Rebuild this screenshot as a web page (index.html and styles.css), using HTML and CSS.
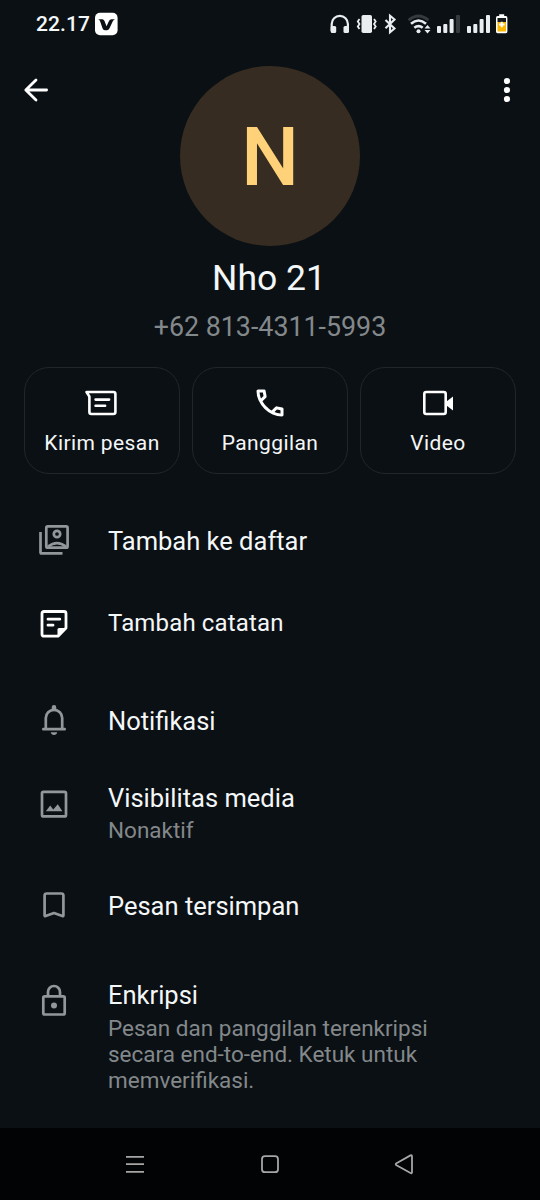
FILE: index.html
```html
<!DOCTYPE html>
<html lang="id">
<head>
<meta charset="utf-8">
<title>Info kontak</title>
<link rel="stylesheet" href="styles.css">
</head>
<body>
<div class="screen">
  <div class="status">
    <div class="status-left">
      <span class="clock">22.17</span>
      <svg width="24" height="24" viewBox="0 0 24 24"><rect x="0" y="0.700" width="22.600" height="22.600" rx="5" fill="#fff"/><path d="M3 7.200h4.200q1.600 0 2.200 1.500l2.100 5.600 2.600-5.600q.7-1.500 2.300-1.500h3.600q-1.400.4-2.200 2l-3.400 7.200q-.8 1.800-2.500 1.800H9.800q-1.500 0-2.200-1.700L5 9q-.6-1.500-2-1.800z" fill="#0b1014"/></svg>
    </div>
    <svg class="status-icons" width="180" height="24" viewBox="330 12 180 24" fill="#e9edef">
      <path d="M331.700 31v-7a8.100 8.100 0 0 1 16.200 0v7" fill="none" stroke="#e9edef" stroke-width="2.200"/>
      <rect x="330.700" y="26" width="5.500" height="7" rx="1.500"/><rect x="343.500" y="26" width="5.500" height="7" rx="1.500"/>
      <rect x="361.500" y="15" width="10.500" height="18" rx="1.800"/>
      <path d="M359.500 19l-1.700 2.500 1.700 2.500-1.700 2.500 1.700 2.500M374 19l1.700 2.500-1.700 2.500 1.700 2.500-1.700 2.500" fill="none" stroke="#e9edef" stroke-width="1.800"/>
      <path d="M385.500 20l9 8.500-4.500 3.800V15.800l4.500 3.700-9 8.700" fill="none" stroke="#e9edef" stroke-width="2.100"/>
      <g fill="none" stroke="#e9edef" stroke-width="2.600">
        <path d="M408.500 20.200q10-8.400 20 0" stroke="#343a3d" stroke-width="2.800"/>
        <path d="M411 23.800q7.500-6.600 15 0"/>
        <path d="M414.300 27.800q4.200-3.500 8.400 0"/>
      </g>
      <circle cx="418.500" cy="31.200" r="2"/><path d="M427.500 25l3 3.500h-6zM427.500 33.500l3-3.500h-6z"/>
      <rect x="437" y="26" width="4" height="7" rx="1"/><rect x="443.300" y="24" width="4" height="9" rx="1"/><rect x="449.600" y="19" width="4" height="14" rx="1"/><rect x="456" y="15" width="4" height="18" rx="1" fill="#343a3d"/>
      <rect x="467" y="26" width="4" height="7" rx="1"/><rect x="473.300" y="24" width="4" height="9" rx="1"/><rect x="479.600" y="19" width="4" height="14" rx="1"/><rect x="486" y="15" width="4" height="18" rx="1"/>
      <path d="M496 18q0-2 1.500-2h1.700v-1.700h5V16h1.700q1.500 0 1.500 2v13.500q0 1.700-1.500 1.700h-8.400q-1.500 0-1.500-1.700z" fill="#fff"/>
      <path d="M497.500 18h8.500v4h-8.500z" fill="#15191b"/><path d="M497.500 22h8.500v9.500h-8.500z" fill="#fbb604"/>
      <path d="M501.800 21.800v5.400M499 24.500h5.600" stroke="#fff" stroke-width="2"/>
    </svg>
  </div>

  <div class="header">
    <svg class="back" width="48" height="48" viewBox="0 0 48 48" fill="none" stroke="#fff" stroke-width="2.800"><path d="M24 14L13.800 24 24 34M14 24h20.600" stroke-linecap="round" stroke-linejoin="round"/></svg>
    <div class="avatar">N</div>
    <svg class="more" width="48" height="48" viewBox="0 0 48 48" fill="#fff"><circle cx="27" cy="15" r="3.100"/><circle cx="27" cy="24" r="3.100"/><circle cx="27" cy="33" r="3.100"/></svg>
  </div>
  <h1 class="name">Nho 21</h1>
  <div class="phone">+62 813-4311-5993</div>

  <div class="actions">
    <div class="action">
      <svg width="36" height="36" viewBox="0 0 36 36" fill="none" stroke="#fff" stroke-width="2.600"><path d="M2.500 7H29.400q2 0 2 2v18q0 2-2 2H7.400q-2 0-2-2V11.500z" stroke-linejoin="round"/><path d="M11.600 14.600h13.500M11.600 20.800h9.500" stroke-linecap="round"/></svg>
      <span>Kirim pesan</span>
    </div>
    <div class="action">
      <svg width="36" height="36" viewBox="0 0 24 24" fill="#fff"><path d="M19.950 21q-3.125 0-6.175-1.362t-5.550-3.863-3.862-5.550T3 4.050q0-.45.3-.75t.75-.3H8.100q.35 0 .625.238t.325.562l.65 3.500q.05.4-.025.675T9.400 8.450L6.975 10.900q.5.925 1.187 1.787t1.513 1.663q.775.775 1.625 1.438T13.100 17l2.350-2.350q.225-.225.588-.337t.712-.063l3.450.7q.35.100.575.363T21 15.900v4.050q0 .45-.3.750t-.75.300zM6.025 9l1.650-1.650L7.250 5H5.025q.125 1.025.350 2.025T6.025 9zm8.950 8.950q.975.425 1.988.675T19 18.950v-2.200l-2.350-.475z"/></svg>
      <span>Panggilan</span>
    </div>
    <div class="action">
      <svg width="36" height="36" viewBox="0 0 36 36"><rect x="4.300" y="7" width="21.400" height="22" rx="2" fill="none" stroke="#fff" stroke-width="2.600"/><path d="M26.500 16.500l6.500-5v14l-6.500-5z" fill="#fff"/></svg>
      <span>Video</span>
    </div>
  </div>

  <div class="group lists">
    <div class="row">
      <svg width="36" height="36" viewBox="0 0 36 36" fill="none" stroke="#92979a" stroke-width="2.700"><rect x="10.300" y="3.400" width="21.300" height="21.300" rx="1.500"/><path d="M4.500 9v20.200q0 1.200 1.200 1.200H26.500"/><circle cx="21" cy="11" r="3.200"/><path d="M12 23.600q9-7 18 0"/></svg>
      <span class="title">Tambah ke daftar</span>
    </div>
    <div class="row">
      <svg width="36" height="36" viewBox="0 0 36 36" fill="none" stroke="#fff" stroke-width="2.800"><path d="M22 31.200H8q-2 0-2-2V8.500q0-2 2-2h20q2 0 2 2V23z" stroke-linejoin="round"/><path d="M21.500 32V24.500q0-1.500 1.500-1.500h8z" fill="#fff" stroke="none"/><path d="M12 14.200h11.800M12 20.200H17" stroke-linecap="round"/></svg>
      <span class="title t-note">Tambah catatan</span>
    </div>
  </div>

  <div class="group settings">
    <div class="row">
      <svg width="36" height="36" viewBox="0 0 36 36" fill="#92979a"><path d="M9.800 25.500V15a8.200 8.200 0 0 1 16.400 0V25.500M7.300 26.200h21.400" fill="none" stroke="#92979a" stroke-width="2.700" stroke-linecap="round"/><path d="M15.700 6.200V4.400a2.300 2.300 0 0 1 4.600 0V6.200zM14.800 29.200h6.400q-.5 2.700-3.200 2.700t-3.200-2.700z"/></svg>
      <span class="title">Notifikasi</span>
    </div>
    <div class="row media">
      <svg width="36" height="36" viewBox="0 0 36 36" fill="none" stroke="#92979a" stroke-width="2.700"><rect x="6" y="5.900" width="24" height="24.500" rx="1.500"/><path d="M9.800 25.300l4.400-5.800 3 4 4.600-5.200 4.600 7z" fill="#92979a" stroke="none"/></svg>
      <div class="texts"><span class="title">Visibilitas media</span><span class="sub">Nonaktif</span></div>
    </div>
    <div class="row">
      <svg width="36" height="36" viewBox="0 0 36 36" fill="none" stroke="#92979a" stroke-width="2.700" stroke-linejoin="round"><path d="M8.600 27.500v-20q0-2 2-2h14.800q2 0 2 2v20q0 1-1 .5L18 25l-8.400 3q-1 .5-1-.5z"/></svg>
      <span class="title">Pesan tersimpan</span>
    </div>
  </div>

  <div class="group encryption">
    <div class="row security">
      <svg width="36" height="36" viewBox="0 0 36 36" fill="none" stroke="#92979a" stroke-width="2.700"><rect x="7.300" y="14.300" width="21.400" height="18.200" rx="1.500"/><path d="M12 14v-4a6 6 0 0 1 12 0v4"/><circle cx="18" cy="23.400" r="3" fill="#92979a" stroke="none"/></svg>
      <div class="texts"><span class="title">Enkripsi</span><p class="sub">Pesan dan panggilan terenkripsi<br>secara end-to-end. Ketuk untuk<br>memverifikasi.</p></div>
    </div>
  </div>

  <div class="navbar">
    <svg width="24" height="24" viewBox="0 0 24 24" fill="none" stroke="#a6a6a6" stroke-width="1.800"><path d="M3 4.800h18M3 12.200h18M3 19.800h18"/></svg>
    <svg width="24" height="24" viewBox="0 0 24 24" fill="none" stroke="#a6a6a6" stroke-width="1.800"><rect x="4" y="4.200" width="16" height="16" rx="3"/></svg>
    <svg width="24" height="24" viewBox="0 0 24 24" fill="none" stroke="#a6a6a6" stroke-width="1.800" stroke-linejoin="round"><path d="M17.500 3.400Q19 2.600 19 4.200v16q0 1.600-1.500.8L3.500 13.200q-1.500-1 0-2z"/></svg>
  </div>
</div>
</body>
</html>
```
FILE: styles.css
```css
* { box-sizing: border-box; }
body {
  margin: 0;
  background: #0b1014;
  color: #f4f7f8;
  font-family: Roboto, "Liberation Sans", sans-serif;
}
svg { display: block; flex: none; }
.screen { width: 540px; height: 1200px; display: flex; flex-direction: column; overflow: hidden; }
.status { height: 48px; padding: 0 30px 0 36px; display: flex; justify-content: space-between; align-items: center; }
.status-left { display: flex; align-items: center; gap: 5px; }
.clock { font-size: 21px; font-weight: 500; line-height: 24px; letter-spacing: 0.1px; }
.header { display: flex; justify-content: space-between; padding: 18px 12px 0; }
.avatar {
  width: 180px; height: 180px; border-radius: 50%;
  background: #362c21; color: #ffd279;
  font-size: 82px; font-weight: 500; line-height: 182px; text-align: center;
}
.name { margin: 12px 0 0; padding-right: 2px; font-size: 35.500px; font-weight: 400; line-height: 41px; text-align: center; }
.phone { margin-top: 12px; font-size: 26.800px; line-height: 33px; text-align: center; color: #83888b; }
.actions { display: grid; grid-template-columns: repeat(3, 1fr); gap: 12px; padding: 0 24px; margin-top: 23px; }
.action {
  height: 107px; padding-top: 17px;
  border: 1.500px solid #20262a; border-radius: 25px;
  display: flex; flex-direction: column; align-items: center; gap: 9px;
  font-size: 21px; line-height: 26px; letter-spacing: 0.4px;
}
.row { height: 82px; padding-left: 36px; display: flex; align-items: center; gap: 36px; }
.title { font-size: 25.500px; line-height: 34px; }
.t-note { font-size: 24px; letter-spacing: 0.150px; }
.sub { margin: 0; font-size: 22.500px; line-height: 26px; color: #83888b; }
.texts { display: flex; flex-direction: column; }
.lists { margin-top: 26px; }
.settings { margin-top: 16px; }
.media { height: 103px; align-items: flex-start; padding-top: 19px; }
.media svg { margin-top: 5px; }
.media .sub { margin-top: 2px; }
.encryption { margin-top: 31px; }
.security { height: auto; align-items: flex-start; }
.security svg { margin-top: 4px; }
.security .sub { margin-top: 3px; }
.navbar { margin-top: auto; height: 72px; background: #020304; display: flex; justify-content: space-between; align-items: center; padding: 0 123px; }
```
